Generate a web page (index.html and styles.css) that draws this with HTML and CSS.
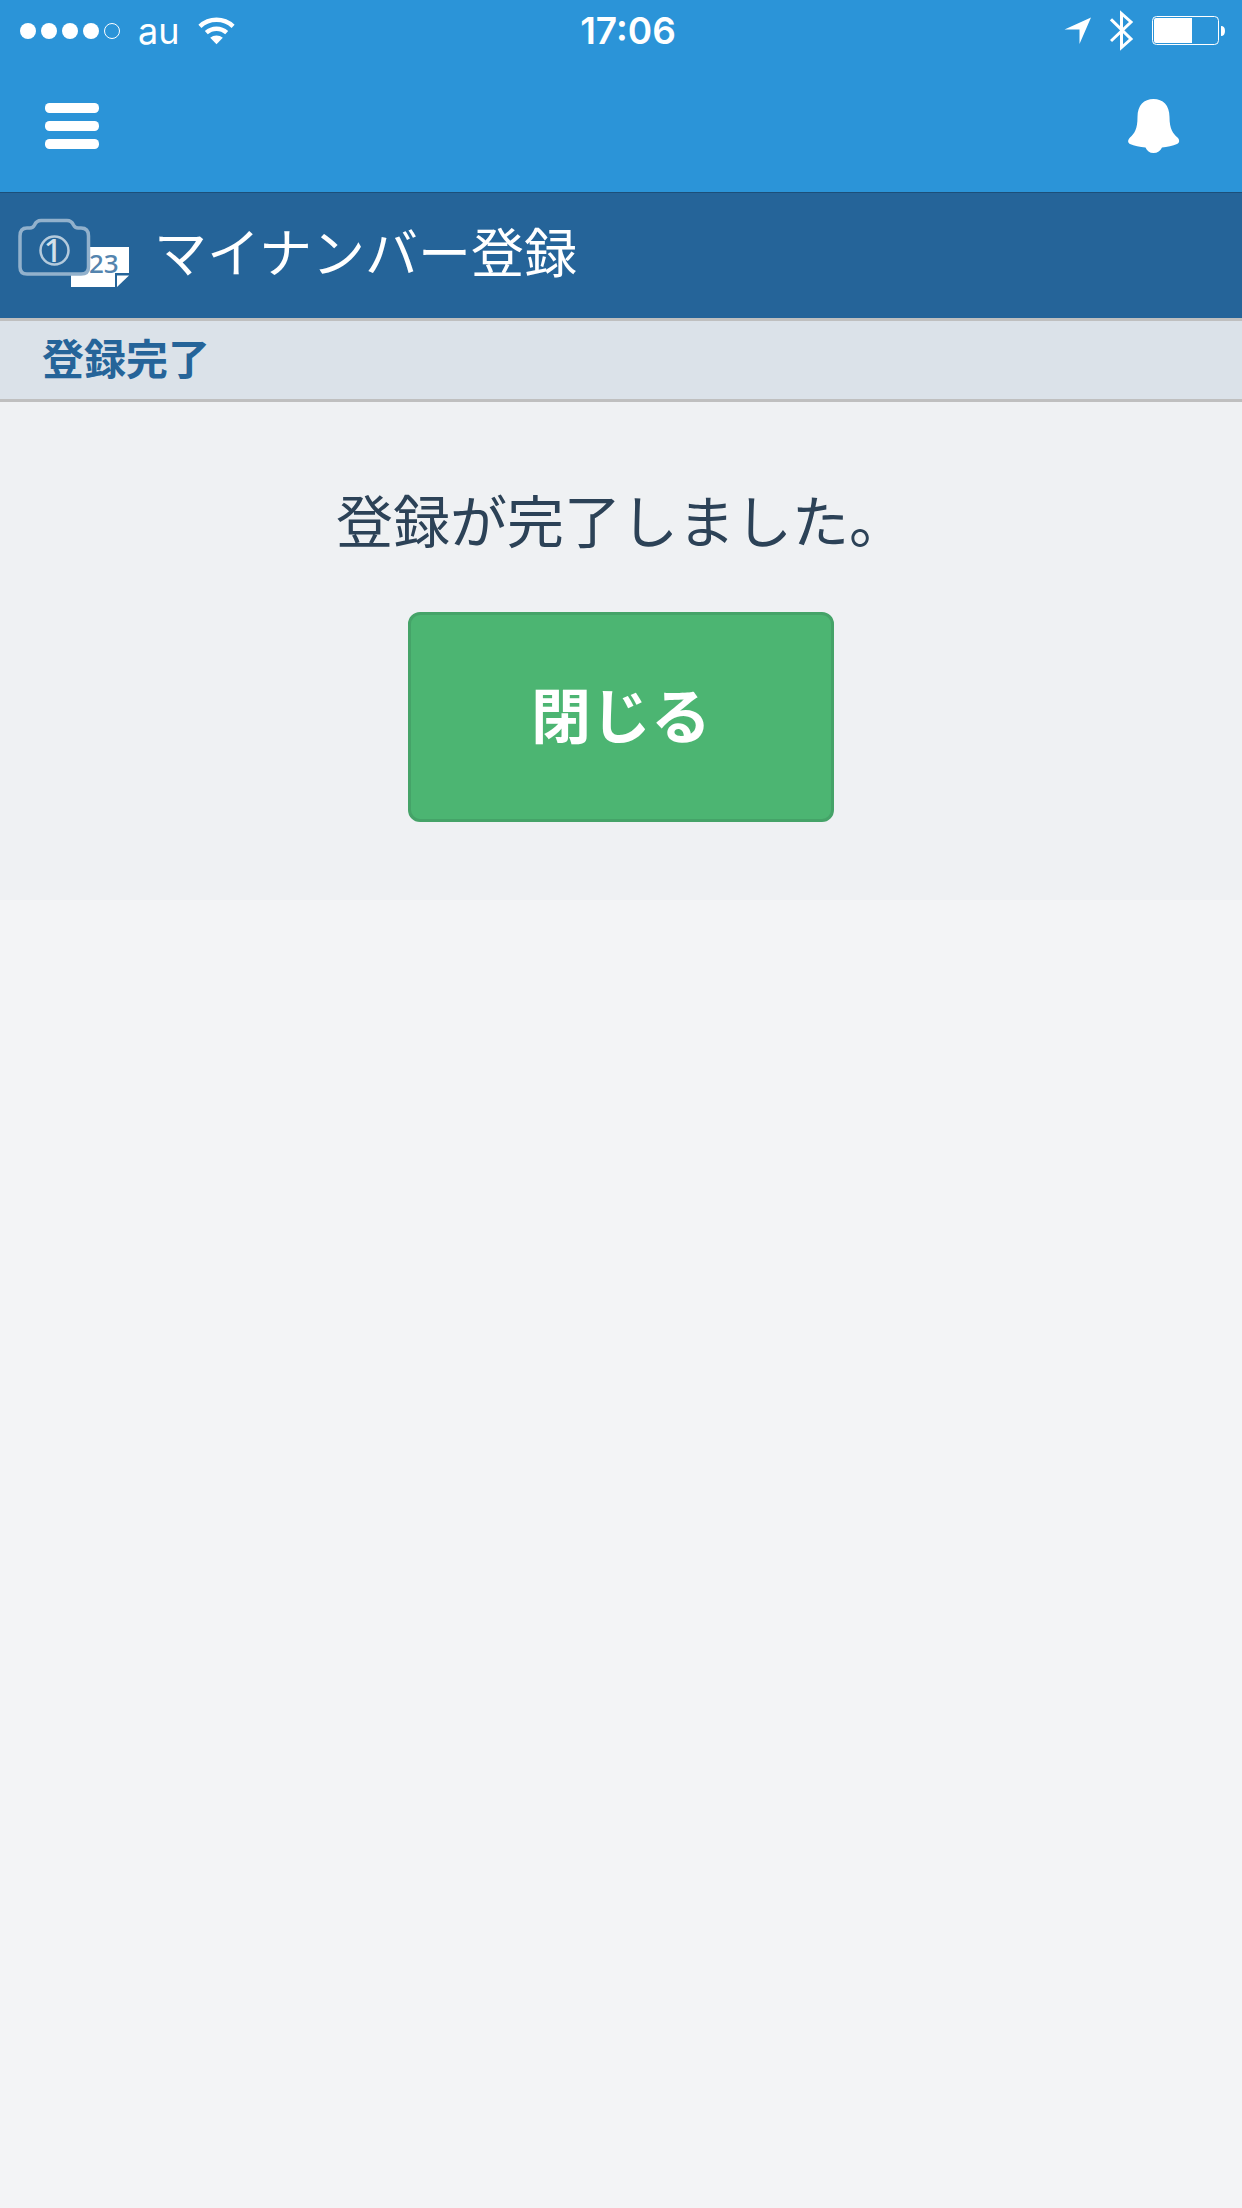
FILE: index.html
```html
<!DOCTYPE html>
<html lang="ja">
<head>
<meta charset="utf-8">
<meta name="viewport" content="width=device-width, initial-scale=1">
<title>マイナンバー登録</title>
<link rel="stylesheet" href="styles.css">
</head>
<body>
<header class="app-bar">
  <div class="status">
    <div class="status-left">
      <svg class="signal" width="100" height="16" viewBox="0 0 100 16" aria-hidden="true">
        <g fill="#fff"><circle cx="8" cy="8" r="8"/><circle cx="29" cy="8" r="8"/><circle cx="50" cy="8" r="8"/><circle cx="71" cy="8" r="8"/></g>
        <circle cx="92" cy="8" r="7.5" fill="none" stroke="#fff"/>
      </svg>
      <span class="carrier">au</span>
      <svg width="38" height="28" viewBox="0 0 38 28" aria-hidden="true">
        <path d="M1.900 9.300A24.200 24.200 0 0 1 35.100 9.300M8.300 15.700A15.200 15.200 0 0 1 28.700 15.700" fill="none" stroke="#fff" stroke-width="4.400"/>
        <path d="M12.200 20.800A9.500 9.500 0 0 1 24.800 20.800L18.500 27.200Z" fill="#fff"/>
      </svg>
    </div>
    <time class="clock">17:06</time>
    <div class="status-right">
      <svg width="28" height="28" viewBox="0 0 28 28" aria-hidden="true"><path d="M.5 12.500L27 .500L15.500 27V12.500Z" fill="#fff"/></svg>
      <svg width="24" height="42" viewBox="0 0 24 42" aria-hidden="true"><path d="M1 9.300L21 29L11.500 37.500V3.500L21 12L1 31" fill="none" stroke="#fff" stroke-width="3"/></svg>
      <svg width="74" height="30" viewBox="0 0 74 30" aria-hidden="true">
        <rect x=".5" y=".5" width="66" height="28" rx="4" fill="none" stroke="#fff"/>
        <path d="M4 2H40V27H4Q2 27 2 25V4Q2 2 4 2Z" fill="#fff"/>
        <path d="M69 10Q73 10 73 15T69 20Z" fill="#fff"/>
      </svg>
    </div>
  </div>
  <nav class="nav">
    <button class="icon-button" type="button" aria-label="メニュー">
      <svg width="54" height="46" viewBox="0 0 54 46"><g fill="#fff"><rect y="0" width="54" height="10" rx="4.500"/><rect y="18" width="54" height="10" rx="4.500"/><rect y="36" width="54" height="10" rx="4.500"/></g></svg>
    </button>
    <button class="icon-button" type="button" aria-label="お知らせ">
      <svg width="52" height="54" viewBox="0 0 52 54"><path d="M25.500 0C35 0 41.500 6 41.500 18C41.500 30 45 34.500 49.500 38.500C52 41 51.500 44 49 45C45 47 39 48 34 48.500C32.500 52 29.500 54 25.500 54S19 52 17.500 48.500C12 48 6 47 2 45C-.5 44-.5 41 2 38.500C6.500 34.500 9.500 30 9.500 18C9.500 6 16 0 25.500 0Z" fill="#fff"/></svg>
    </button>
  </nav>
</header>
<div class="title-bar">
  <svg class="title-icon" width="112" height="72" viewBox="0 0 112 72" aria-hidden="true">
    <path d="M53 29H111V55H97V69H53Z" fill="#fff"/>
    <path d="M99 57.500H111L99 69Z" fill="#fff"/>
    <path d="M9 10H12Q15 10 16.500 7Q18.500 2.500 23 2.500H49Q53.500 2.500 55.500 7Q57 10 60 10H63Q70.500 10 70.500 18V49Q70.500 56 63 56H9Q2 56 2 49V18Q2 10 9 10Z" fill="#256499" stroke="#92b1cc" stroke-width="3.500"/>
    <circle cx="36.500" cy="32.500" r="14" fill="none" stroke="#b4cadc" stroke-width="2.500"/>
    <text class="icon-one" x="35" y="44" text-anchor="middle">1</text>
    <text class="icon-digits" x="71" y="55">23</text>
  </svg>
  <h1 class="title">マイナンバー登録</h1>
</div>
<h2 class="section-title">登録完了</h2>
<main class="content">
  <p class="message">登録が完了しました。</p>
  <button class="close-button" type="button">閉じる</button>
</main>
</body>
</html>
```
FILE: styles.css
```css
* {
  box-sizing: border-box;
}

body {
  margin: 0;
  background: #f3f4f6;
  color: #2c4257;
  font-family: "Noto Sans CJK JP", sans-serif;
}

svg {
  display: block;
}

.app-bar {
  background: #2b94d8;
  border-bottom: 1px solid #1c4f7a;
}

.status {
  display: grid;
  grid-template-columns: 1fr auto 1fr;
  align-items: center;
  height: 62px;
  padding: 0 16px 0 20px;
  color: #fff;
  font: 36px/62px Inter, sans-serif;
}

.status-left,
.status-right {
  display: flex;
  align-items: center;
  gap: 18px;
}

.status-right {
  justify-content: flex-end;
}

.clock {
  padding-left: 10px;
  font-size: 37px;
  font-weight: 600;
}

.nav {
  display: flex;
  justify-content: space-between;
  align-items: center;
  height: 130px;
  padding: 0 62px 2px 45px;
}

.icon-button {
  padding: 0;
  border: 0;
  background: none;
}

.title-bar {
  display: flex;
  align-items: flex-start;
  gap: 24px;
  padding: 25px 18px 28px;
  background: #256499;
}

.icon-one,
.icon-digits {
  font-family: "Noto Sans", sans-serif;
}

.icon-one {
  font-size: 32px;
  font-weight: 500;
  fill: #d3e0ea;
}

.icon-digits {
  font-size: 26px;
  font-weight: 500;
  fill: #5484ae;
}

.title {
  margin: 0;
  color: #fff;
  font-size: 53px;
  font-weight: 400;
  line-height: 64px;
}

.section-title {
  margin: 0;
  padding: 0 42px 6px;
  border: solid #bfbfbf;
  border-width: 3px 0;
  background: #dbe2e9;
  color: #256499;
  font-size: 42px;
  font-weight: 700;
  line-height: 72px;
}

.content {
  display: flex;
  flex-direction: column;
  align-items: center;
  gap: 52px;
  padding: 74px 42px 78px;
  background: #eff1f3;
}

.message {
  margin: 0;
  font-size: 57px;
  font-weight: 400;
  line-height: 84px;
}

.close-button {
  padding: 56px 120px 64px;
  border: 3px solid #45a368;
  border-radius: 12px;
  background: #4cb572;
  color: #fff;
  font: 700 60px/84px "Noto Sans CJK JP", sans-serif;
}
```
